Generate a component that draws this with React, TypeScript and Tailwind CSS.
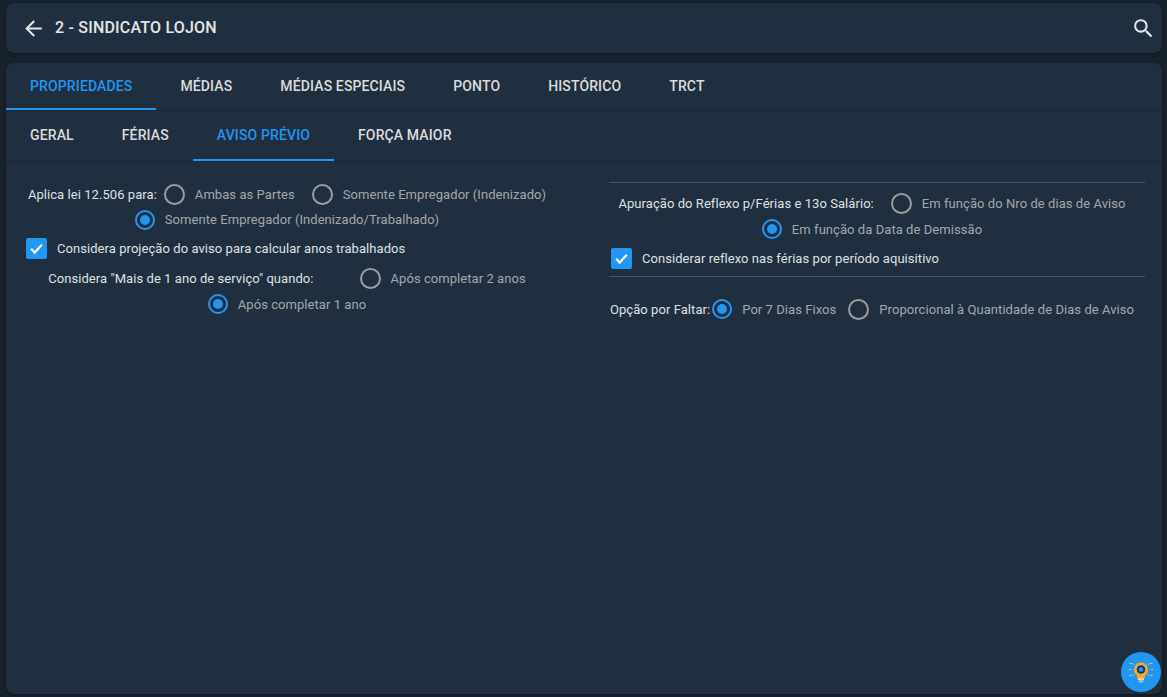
import { MdArrowBack, MdSearch } from "react-icons/md";

const mainTabs = ["PROPRIEDADES", "MÉDIAS", "MÉDIAS ESPECIAIS", "PONTO", "HISTÓRICO", "TRCT"];
const subTabs = ["GERAL", "FÉRIAS", "AVISO PRÉVIO", "FORÇA MAIOR"];

const Tab = ({ label, active, h }: { label: string; active: boolean; h: string }) => (
  <div
    className={`px-6 flex items-center text-sm font-medium tracking-[0.13px] border-b-2 ${h} ${
      active ? "text-[#2196f3] border-[#2196f3]" : "text-[#dcdcdc] border-transparent"
    }`}
  >
    {label}
  </div>
);

const Radio = ({ label, checked }: { label: string; checked?: boolean }) => (
  <div className="flex items-center h-[25px]">
    <span
      className={`rounded-full border-2 flex items-center justify-center shrink-0 ${
        checked ? "w-[20px] h-[20px] border-[#2196f3]" : "w-[21px] h-[21px] border-[#9c9c9c]"
      }`}
    >
      {checked && <span className="w-[10px] h-[10px] rounded-full bg-[#2196f3]" />}
    </span>
    <span className="ml-[10px] text-[#a3a7ab]">{label}</span>
  </div>
);

const Check = ({ label }: { label: string }) => (
  <div className="flex items-center h-[21px]">
    <span className="w-[21px] h-[21px] rounded-[2px] bg-[#2196f3] flex items-center justify-center shrink-0">
      <svg width="15" height="15" viewBox="0 0 24 24" fill="none" stroke="#fff" strokeWidth="3.4">
        <path d="M3.5 12.5l5.5 6L20.5 6" />
      </svg>
    </span>
    <span className="ml-[10px] text-[#dfe1e3]">{label}</span>
  </div>
);

const Bulb = () => (
  <div className="absolute right-[1px] bottom-[2px] w-10 h-10 rounded-full bg-[#2196f3] flex items-center justify-center">
    <svg width="26" height="26" viewBox="0 0 26 26" fill="none">
      <path d="M13 3.5a7 7 0 0 0-4 12.7V19h8v-2.8A7 7 0 0 0 13 3.5z" fill="#f9a825" />
      <circle cx="13" cy="10.5" r="4.4" fill="#2196f3" />
      <circle cx="13" cy="10.5" r="3.2" fill="none" stroke="#1d3557" strokeWidth="1.8" />
      <rect x="10" y="19" width="6" height="2" fill="#ffcc80" />
      <rect x="10.5" y="21" width="5" height="2.4" rx="1" fill="#80cbc4" />
      <g stroke="#ffc470" strokeWidth="1" strokeDasharray="2 1.2">
        <path d="M1.5 4.5h3.5l1.5 2M1 10.5h3.5M1.5 16.5h3.5l1.5-2" />
        <path d="M24.5 4.5H21l-1.5 2M25 10.5h-3.5M24.5 16.5H21l-1.5-2" />
      </g>
    </svg>
  </div>
);

export default function App() {
  return (
    <div className="h-[697px] w-[1167px] overflow-hidden bg-[#18222d] pl-[6px] pr-[5px] pt-[3px] pb-[3px] flex flex-col gap-[10px] font-['Roboto',sans-serif]">
      <header className="h-[50px] shrink-0 rounded-lg bg-[#202f40] shadow-[0_1px_3px_rgba(0,0,0,0.35)] flex items-center pl-[15px] pr-[6px]">
        <MdArrowBack size={25} className="text-[#e4e6e8]" />
        <span className="ml-[9px] text-base font-medium tracking-[0.2px] text-[#e4e6e8]">2 - SINDICATO LOJON</span>
        <MdSearch size={25} className="ml-auto text-[#e4e6e8]" />
      </header>

      <main className="relative flex-1 rounded-lg bg-[#202f40] shadow-[0_1px_3px_rgba(0,0,0,0.35)] flex flex-col">
        <nav className="flex border-b border-[#1b2735]">
          {mainTabs.map((t, i) => (
            <Tab key={t} label={t} active={i === 0} h="h-[47px]" />
          ))}
        </nav>
        <nav className="flex border-b border-[#1b2735]">
          {subTabs.map((t, i) => (
            <Tab key={t} label={t} active={i === 2} h="h-[50px]" />
          ))}
        </nav>

        <section className="flex items-start pt-[20px] text-[13px] tracking-[0.06px] leading-[25px]">
          <div className="ml-[20px] w-[522px] flex flex-col">
            <div className="flex flex-wrap justify-center items-center">
              <span className="text-[#dfe1e3] mr-[7px]">Aplica lei 12.506 para:</span>
              <Radio label="Ambas as Partes" />
              <span className="w-[17px]" />
              <Radio label="Somente Empregador (Indenizado)" />
              <div className="basis-full h-0" />
              <Radio checked label="Somente Empregador (Indenizado/Trabalhado)" />
            </div>
            <div className="mt-[6px]">
              <Check label="Considera projeção do aviso para calcular anos trabalhados" />
            </div>
            <div className="mt-[7px] flex flex-wrap justify-center items-center">
              <span className="text-[#dfe1e3] mr-[46px]">Considera "Mais de 1 ano de serviço" quando:</span>
              <Radio label="Após completar 2 anos" />
              <div className="basis-full h-[0.5px]" />
              <Radio checked label="Após completar 1 ano" />
            </div>
          </div>

          <div className="ml-[61px] w-[536px] flex flex-col">
            <div className="border-t border-[#445263] pt-[8px] pr-[10px] flex flex-wrap justify-center items-center">
              <span className="text-[#dfe1e3] mr-[17px]">Apuração do Reflexo p/Férias e 13o Salário:</span>
              <Radio label="Em função do Nro de dias de Aviso" />
              <div className="basis-full h-[0.5px]" />
              <Radio checked label="Em função da Data de Demissão" />
            </div>
            <div className="mt-[6px] ml-[2px]">
              <Check label="Considerar reflexo nas férias por período aquisitivo" />
            </div>
            <div className="mt-[7px] border-t border-[#445263] pt-[20px] flex items-center">
              <span className="ml-[1px] text-[#dfe1e3] mr-[2px]">Opção por Faltar:</span>
              <Radio checked label="Por 7 Dias Fixos" />
              <span className="w-[12px]" />
              <Radio label="Proporcional à Quantidade de Dias de Aviso" />
            </div>
          </div>
        </section>

        <Bulb />
      </main>
    </div>
  );
}
